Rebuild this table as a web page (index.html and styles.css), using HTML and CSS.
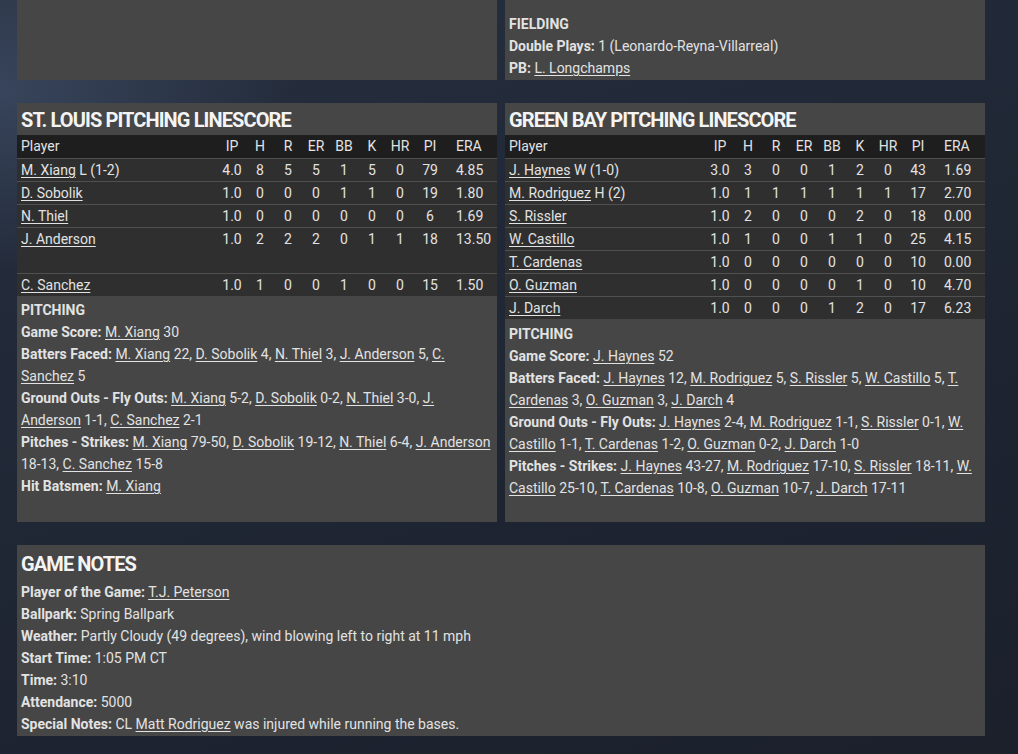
FILE: index.html
```html
<!DOCTYPE html>
<html lang="en">
<head>
<meta charset="utf-8">
<title>Box Score</title>
<link rel="stylesheet" href="styles.css">
</head>
<body>
<div class="page">
  <div class="row two top">
    <section class="panel stub"></section>
    <section class="panel stub fielding">
      <div class="line"><b>FIELDING</b></div>
      <div class="line"><b>Double Plays:</b> 1 (Leonardo-Reyna-Villarreal)</div>
      <div class="line"><b>PB:</b> <a href="#">L. Longchamps</a></div>
    </section>
  </div>

  <div class="row two">
    <section class="panel">
      <h2 class="title">ST. LOUIS PITCHING LINESCORE</h2>
      <table class="ls">
        <colgroup><col class="c-player"><col class="c-n"><col class="c-n"><col class="c-n"><col class="c-n"><col class="c-n"><col class="c-n"><col class="c-n"><col class="c-pi"><col class="c-era"></colgroup>
        <thead><tr><th>Player</th><th>IP</th><th>H</th><th>R</th><th>ER</th><th>BB</th><th>K</th><th>HR</th><th>PI</th><th>ERA</th></tr></thead>
        <tbody>
          <tr><td><a href="#">M. Xiang</a> L (1-2)</td><td>4.0</td><td>8</td><td>5</td><td>5</td><td>1</td><td>5</td><td>0</td><td>79</td><td>4.85</td></tr>
          <tr><td><a href="#">D. Sobolik</a></td><td>1.0</td><td>0</td><td>0</td><td>0</td><td>1</td><td>1</td><td>0</td><td>19</td><td>1.80</td></tr>
          <tr><td><a href="#">N. Thiel</a></td><td>1.0</td><td>0</td><td>0</td><td>0</td><td>0</td><td>0</td><td>0</td><td>6</td><td>1.69</td></tr>
          <tr class="tall"><td><a href="#">J. Anderson</a></td><td>1.0</td><td>2</td><td>2</td><td>2</td><td>0</td><td>1</td><td>1</td><td>18</td><td>13.50</td></tr>
          <tr><td><a href="#">C. Sanchez</a></td><td>1.0</td><td>1</td><td>0</td><td>0</td><td>1</td><td>0</td><td>0</td><td>15</td><td>1.50</td></tr>
        </tbody>
      </table>
      <div class="notes">
        <div class="line"><b>PITCHING</b></div>
        <div class="line"><b>Game Score:</b> <a href="#">M. Xiang</a> 30</div>
        <div class="line"><b>Batters Faced:</b> <a href="#">M. Xiang</a> 22, <a href="#">D. Sobolik</a> 4, <a href="#">N. Thiel</a> 3, <a href="#">J. Anderson</a> 5, <a href="#">C. Sanchez</a> 5</div>
        <div class="line"><b>Ground Outs - Fly Outs:</b> <a href="#">M. Xiang</a> 5-2, <a href="#">D. Sobolik</a> 0-2, <a href="#">N. Thiel</a> 3-0, <a href="#">J. Anderson</a> 1-1, <a href="#">C. Sanchez</a> 2-1</div>
        <div class="line"><b>Pitches - Strikes:</b> <a href="#">M. Xiang</a> 79-50, <a href="#">D. Sobolik</a> 19-12, <a href="#">N. Thiel</a> 6-4, <a href="#">J. Anderson</a> 18-13, <a href="#">C. Sanchez</a> 15-8</div>
        <div class="line"><b>Hit Batsmen:</b> <a href="#">M. Xiang</a></div>
      </div>
    </section>

    <section class="panel">
      <h2 class="title">GREEN BAY PITCHING LINESCORE</h2>
      <table class="ls">
        <colgroup><col class="c-player"><col class="c-n"><col class="c-n"><col class="c-n"><col class="c-n"><col class="c-n"><col class="c-n"><col class="c-n"><col class="c-pi"><col class="c-era"></colgroup>
        <thead><tr><th>Player</th><th>IP</th><th>H</th><th>R</th><th>ER</th><th>BB</th><th>K</th><th>HR</th><th>PI</th><th>ERA</th></tr></thead>
        <tbody>
          <tr><td><a href="#">J. Haynes</a> W (1-0)</td><td>3.0</td><td>3</td><td>0</td><td>0</td><td>1</td><td>2</td><td>0</td><td>43</td><td>1.69</td></tr>
          <tr><td><a href="#">M. Rodriguez</a> H (2)</td><td>1.0</td><td>1</td><td>1</td><td>1</td><td>1</td><td>1</td><td>1</td><td>17</td><td>2.70</td></tr>
          <tr><td><a href="#">S. Rissler</a></td><td>1.0</td><td>2</td><td>0</td><td>0</td><td>0</td><td>2</td><td>0</td><td>18</td><td>0.00</td></tr>
          <tr><td><a href="#">W. Castillo</a></td><td>1.0</td><td>1</td><td>0</td><td>0</td><td>1</td><td>1</td><td>0</td><td>25</td><td>4.15</td></tr>
          <tr><td><a href="#">T. Cardenas</a></td><td>1.0</td><td>0</td><td>0</td><td>0</td><td>0</td><td>0</td><td>0</td><td>10</td><td>0.00</td></tr>
          <tr><td><a href="#">O. Guzman</a></td><td>1.0</td><td>0</td><td>0</td><td>0</td><td>0</td><td>1</td><td>0</td><td>10</td><td>4.70</td></tr>
          <tr><td><a href="#">J. Darch</a></td><td>1.0</td><td>0</td><td>0</td><td>0</td><td>1</td><td>2</td><td>0</td><td>17</td><td>6.23</td></tr>
        </tbody>
      </table>
      <div class="notes notes-r">
        <div class="line"><b>PITCHING</b></div>
        <div class="line"><b>Game Score:</b> <a href="#">J. Haynes</a> 52</div>
        <div class="line"><b>Batters Faced:</b> <a href="#">J. Haynes</a> 12, <a href="#">M. Rodriguez</a> 5, <a href="#">S. Rissler</a> 5, <a href="#">W. Castillo</a> 5, <a href="#">T. Cardenas</a> 3, <a href="#">O. Guzman</a> 3, <a href="#">J. Darch</a> 4</div>
        <div class="line"><b>Ground Outs - Fly Outs:</b> <a href="#">J. Haynes</a> 2-4, <a href="#">M. Rodriguez</a> 1-1, <a href="#">S. Rissler</a> 0-1, <a href="#">W. Castillo</a> 1-1, <a href="#">T. Cardenas</a> 1-2, <a href="#">O. Guzman</a> 0-2, <a href="#">J. Darch</a> 1-0</div>
        <div class="line"><b>Pitches - Strikes:</b> <a href="#">J. Haynes</a> 43-27, <a href="#">M. Rodriguez</a> 17-10, <a href="#">S. Rissler</a> 18-11, <a href="#">W. Castillo</a> 25-10, <a href="#">T. Cardenas</a> 10-8, <a href="#">O. Guzman</a> 10-7, <a href="#">J. Darch</a> 17-11</div>
      </div>
    </section>
  </div>

  <section class="panel gamenotes">
    <h2 class="title big">GAME NOTES</h2>
    <div class="line"><b>Player of the Game:</b> <a href="#">T.J. Peterson</a></div>
    <div class="line"><b>Ballpark:</b> Spring Ballpark</div>
    <div class="line"><b>Weather:</b> Partly Cloudy (49 degrees), wind blowing left to right at 11 mph</div>
    <div class="line"><b>Start Time:</b> 1:05 PM CT</div>
    <div class="line"><b>Time:</b> 3:10</div>
    <div class="line"><b>Attendance:</b> 5000</div>
    <div class="line"><b>Special Notes:</b> CL <a href="#">Matt Rodriguez</a> was injured while running the bases.</div>
  </section>
</div>
</body>
</html>
```

FILE: styles.css
```css
html, body {
  margin: 0;
  padding: 0;
}
body {
  width: 1018px;
  height: 754px;
  overflow: hidden;
  font-family: Roboto, "Noto Sans", sans-serif;
  font-size: 14px;
  color: #e2e2e2;
  background-color: #1f2634;
  background-image:
    radial-gradient(ellipse 420px 260px at 0px 90px, rgba(70, 86, 115, 0.55), rgba(70, 86, 115, 0) 70%),
    linear-gradient(160deg, #27303f 0%, #212938 35%, #1d2330 70%, #1b202b 100%);
}
.page {
  width: 968px;
  padding-left: 17px;
}
.row.two {
  display: grid;
  grid-template-columns: 480px 480px;
  column-gap: 8px;
  margin-bottom: 23px;
}
.panel {
  background: #464646;
}
.stub {
  height: 80px;
}
.fielding {
  display: flex;
  flex-direction: column;
  justify-content: flex-end;
  padding: 0 4px 1px;
  box-sizing: border-box;
}
.line {
  line-height: 22px;
  padding: 0;
}
b {
  font-weight: 700;
}
a {
  color: inherit;
  text-decoration: underline;
  text-underline-offset: 2px;
}
.title {
  margin: 0;
  padding: 0 4px;
  height: 32px;
  line-height: 35px;
  font-size: 20px;
  font-weight: 700;
  letter-spacing: -0.9px;
  color: #f4f4f4;
}
.title.big {
  height: 36px;
  line-height: 38px;
}
.ls {
  width: 480px;
  border-collapse: collapse;
  table-layout: fixed;
}
.c-player { width: 201px; }
.c-n { width: 28px; }
.c-pi { width: 32px; }
.c-era { width: 51px; }
.ls th, .ls td {
  height: 22px;
  padding: 0;
  line-height: 22px;
  font-weight: 400;
  text-align: center;
  white-space: nowrap;
  vertical-align: top;
}
.ls th:first-child, .ls td:first-child {
  text-align: left;
  padding-left: 4px;
}
.ls th:last-child, .ls td:last-child {
  text-align: left;
  padding-left: 10px;
}
.ls thead tr {
  background: #1e1e1e;
}
.ls thead th {
  height: 23px;
  line-height: 23px;
}
.ls tbody tr {
  background: #2f2f2f;
  border-top: 1px solid #505050;
}
.ls tbody tr.tall td {
  height: 45px;
}
.notes {
  padding: 3px 4px 23px;
}
.notes-r {
  padding-top: 4px;
}
.gamenotes {
  padding: 0 4px 1px;
}
.gamenotes .title {
  padding: 0;
}
```
